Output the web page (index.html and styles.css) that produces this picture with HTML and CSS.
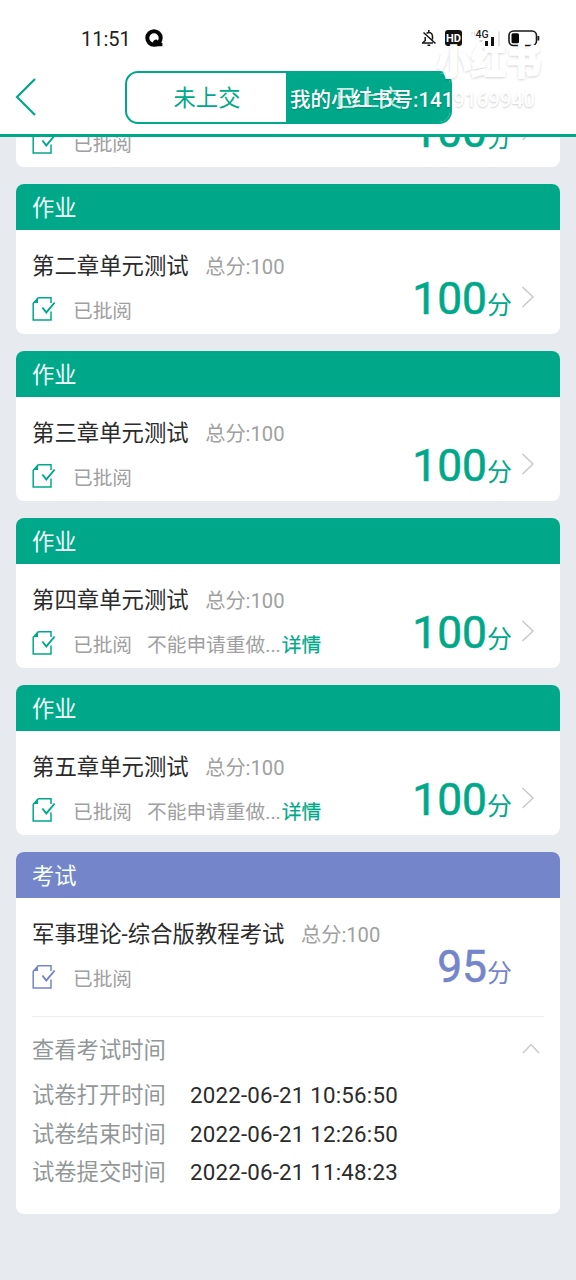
FILE: index.html
```html
<!DOCTYPE html>
<html lang="zh-CN">
<head>
<meta charset="utf-8">
<meta name="viewport" content="width=device-width, initial-scale=1">
<title>作业考试</title>
<link rel="stylesheet" href="styles.css">
</head>
<body>
<svg class="defs" width="0" height="0">
  <symbol id="doc" viewBox="0 0 25 26">
    <path d="M6.5 1.8H19V7M19 15.5V24H1.2V7.4L6.5 1.8" fill="none" stroke="currentColor" stroke-width="1.5"/>
    <path d="M1 7L6 1V7Z" fill="currentColor"/>
    <path d="M10.3 11.5L14.3 16.4L22.7 6.5" fill="none" stroke="currentColor" stroke-width="1.9"/>
  </symbol>
  <symbol id="next" viewBox="0 0 14 24">
    <path d="M1.5 2L12 12L1.5 22" fill="none" stroke="currentColor" stroke-width="1.5"/>
  </symbol>
</svg>
<header class="top">
  <div class="status-bar">
    <span class="clock">11:51</span>
    <svg class="q-icon" viewBox="0 0 18 18"><circle cx="9" cy="9" r="6.7" fill="none" stroke="#050505" stroke-width="4"/><path d="M8 12.5Q11 9 13 12L17.4 14V17.2H9Z" fill="#050505"/></svg>
    <div class="indicators">
      <svg class="bell" viewBox="0 0 16 18"><path d="M1 14H12M2 13.5L4.2 11.5V8M5.5 4.2Q10.8 2.2 11.5 7V10.5M7.8 1V3M6.5 16.2H9.2M2.5 3.5L14.5 14.5" fill="none" stroke="#151515" stroke-width="1.5"/></svg>
      <span class="hd">HD</span>
      <svg class="signal" viewBox="0 0 30 18"><path d="M1 3V6.5M3.5 3V6.5" stroke="#ddd" stroke-width="1"/><text class="network" x="4.5" y="9">4G</text><path d="M8.5 12H11.5" stroke="#aaa" stroke-width="1"/><path d="M15.5 12V17M21.5 8V17" stroke="#111" stroke-width="3"/><path d="M28 2.5V17" stroke="#ddd" stroke-width="1.6"/></svg>
      <svg class="battery" viewBox="0 0 32 18"><rect x="1" y="2" width="27.5" height="14.5" rx="4.5" fill="none" stroke="#181818" stroke-width="1.6"/><rect x="3.5" y="4.3" width="7.5" height="10" rx="1.5" fill="#080808"/><path d="M30.4 7V11.5" stroke="#181818" stroke-width="1.8"/></svg>
    </div>
  </div>
  <nav class="nav">
    <svg class="back" viewBox="0 0 22 40"><path d="M20 2L2 20L20 38" fill="none" stroke="currentColor" stroke-width="2.2"/></svg>
    <div class="tabs"><span class="tab">未上交</span><span class="tab active">已上交</span></div>
  </nav>
</header>
<div class="brand">小红书</div>
<div class="account">我的小红书号:1419169940</div>
<main class="list">
  <section class="card">
    <h2 class="kind">作业</h2>
    <div class="body">
      <div class="info"><div class="title">第一章单元测试<span class="total">总分:100</span></div><div class="state"><svg class="doc"><use href="#doc"/></svg><span>已批阅</span></div></div>
      <div class="score">100<small>分</small></div><svg class="next"><use href="#next"/></svg>
    </div>
  </section>
  <section class="card">
    <h2 class="kind">作业</h2>
    <div class="body">
      <div class="info"><div class="title">第二章单元测试<span class="total">总分:100</span></div><div class="state"><svg class="doc"><use href="#doc"/></svg><span>已批阅</span></div></div>
      <div class="score">100<small>分</small></div><svg class="next"><use href="#next"/></svg>
    </div>
  </section>
  <section class="card">
    <h2 class="kind">作业</h2>
    <div class="body">
      <div class="info"><div class="title">第三章单元测试<span class="total">总分:100</span></div><div class="state"><svg class="doc"><use href="#doc"/></svg><span>已批阅</span></div></div>
      <div class="score">100<small>分</small></div><svg class="next"><use href="#next"/></svg>
    </div>
  </section>
  <section class="card">
    <h2 class="kind">作业</h2>
    <div class="body">
      <div class="info"><div class="title">第四章单元测试<span class="total">总分:100</span></div><div class="state"><svg class="doc"><use href="#doc"/></svg><span>已批阅</span><span class="note">不能申请重做...<b>详情</b></span></div></div>
      <div class="score">100<small>分</small></div><svg class="next"><use href="#next"/></svg>
    </div>
  </section>
  <section class="card">
    <h2 class="kind">作业</h2>
    <div class="body">
      <div class="info"><div class="title">第五章单元测试<span class="total">总分:100</span></div><div class="state"><svg class="doc"><use href="#doc"/></svg><span>已批阅</span><span class="note">不能申请重做...<b>详情</b></span></div></div>
      <div class="score">100<small>分</small></div><svg class="next"><use href="#next"/></svg>
    </div>
  </section>
  <section class="card exam">
    <h2 class="kind">考试</h2>
    <div class="body">
      <div class="info"><div class="title">军事理论-综合版教程考试<span class="total">总分:100</span></div><div class="state"><svg class="doc"><use href="#doc"/></svg><span>已批阅</span></div></div>
      <div class="score">95<small>分</small></div>
    </div>
    <div class="times">
      <div class="toggle">查看考试时间<svg class="up" viewBox="0 0 18 11"><path d="M1 10L9 1.5L17 10" fill="none" stroke="currentColor" stroke-width="1.5"/></svg></div>
      <dl class="rows">
        <dt>试卷打开时间</dt><dd>2022-06-21 10:56:50</dd>
        <dt>试卷结束时间</dt><dd>2022-06-21 12:26:50</dd>
        <dt>试卷提交时间</dt><dd>2022-06-21 11:48:23</dd>
      </dl>
    </div>
  </section>
</main>
</body>
</html>
```

FILE: styles.css
```css
* { box-sizing: border-box; }
body {
  --accent: #00a88a;
  margin: 0;
  height: 1280px;
  overflow: hidden;
  position: relative;
  background: #e7eaef;
  color: #2b2b2b;
  font-family: Roboto, "Noto Sans CJK SC", sans-serif;
}
svg { display: block; flex: none; }
.defs { position: absolute; }
.top {
  position: relative;
  z-index: 1;
  height: 137px;
  background: #fff;
  border-bottom: 3px solid var(--accent);
}
.status-bar {
  height: 70px;
  padding: 7px 36px 0 81px;
  display: flex;
  align-items: center;
}
.clock { font-size: 20px; letter-spacing: 0; color: #222; width: 64px; }
.q-icon { width: 18px; height: 18px; margin-bottom: 1px; }
.indicators { margin-left: auto; margin-bottom: 2px; display: flex; align-items: center; }
.bell { width: 16px; height: 18px; margin-right: 8px; }
.hd {
  width: 17px; height: 16px;
  border-radius: 3px;
  background: #111;
  color: #fff;
  font-size: 11px;
  line-height: 17px;
  font-weight: 700;
  text-align: center;
  margin-right: 9px;
}
.signal { width: 30px; height: 18px; margin-right: 7px; }
.network { font-size: 10.5px; font-weight: 500; fill: #222; }
.battery { width: 32px; height: 18px; }
.nav { display: flex; align-items: center; padding-left: 15px; height: 54px; }
.back { width: 22px; height: 40px; color: var(--accent); }
.tabs {
  width: 327px;
  height: 53px;
  margin-left: 88px;
  border: 2px solid var(--accent);
  border-radius: 13px;
  overflow: hidden;
  display: flex;
}
.tab {
  width: 159px;
  padding-left: 1px;
  font-size: 22.3px;
  line-height: 51px;
  text-align: center;
  color: var(--accent);
}
.active { flex: 1; background: var(--accent); color: rgba(255, 255, 255, .8); }
.brand, .account {
  position: absolute;
  z-index: 2;
  color: #fff;
  white-space: nowrap;
}
.brand {
  left: 436px;
  top: 39px;
  font-size: 35px;
  line-height: 50px;
  font-weight: 900;
  -webkit-text-stroke: 1.5px #fff;
  text-shadow: 0 1px 3px rgba(0, 0, 0, .3);
}
.account {
  left: 290px;
  top: 85px;
  font-size: 20.5px;
  line-height: 30px;
  font-weight: 500;
  text-shadow: 0 1px 2px rgba(0, 0, 0, .2);
}
.list {
  margin-top: -120.5px;
  padding: 0 16px;
  display: grid;
  gap: 16.5px;
}
.card { background: #fff; border-radius: 8px; overflow: hidden; height: 150.5px; }
.exam { --accent: #7585c9; height: 362px; }
.kind {
  margin: 0;
  height: 46.5px;
  padding-left: 16px;
  background: var(--accent);
  color: #f4fffc;
  font-size: 22.3px;
  font-weight: 400;
  line-height: 49px;
}
.body { height: 104px; padding: 20px 25px 0 16px; display: flex; }
.info { flex: 1; }
.title { font-size: 22.4px; line-height: 32px; white-space: nowrap; }
.total { margin-left: 16.5px; font-size: 20.2px; color: #a0a0a0; }
.state {
  margin-top: 13px;
  height: 26px;
  display: flex;
  align-items: center;
  font-size: 19.7px;
  color: #a0a0a0;
  white-space: nowrap;
}
.doc { width: 25px; height: 26px; margin-right: 16px; color: var(--accent); }
.note { margin-left: 15px; }
.note b { margin-left: 1px; font-weight: 400; -webkit-text-stroke: .25px; color: var(--accent); }
.score {
  margin-right: 9px;
  padding-top: 23px;
  font-size: 44.3px;
  line-height: 52px;
  color: var(--accent);
  white-space: nowrap;
  -webkit-text-stroke: .6px;
}
.score small { font-size: 25px; -webkit-text-stroke: 0; }
.next { width: 14px; height: 24px; margin-top: 35px; color: #c9c9c9; }
.exam .score { margin-right: 23px; }
.times { margin: 14px 16px 0; border-top: 1px solid #eee; color: #929797; font-size: 22.3px; }
.toggle {
  display: flex;
  justify-content: space-between;
  align-items: center;
  height: 61px;
  padding-right: 4px;
}
.up { width: 18px; height: 11px; margin-top: 2px; color: #c9c9c9; }
.rows {
  margin: -2px 0 0;
  display: grid;
  grid-template-columns: 158px 1fr;
  line-height: 38.5px;
}
.rows dd { margin: 0; color: #2b2b2b; letter-spacing: .2px; }
```
